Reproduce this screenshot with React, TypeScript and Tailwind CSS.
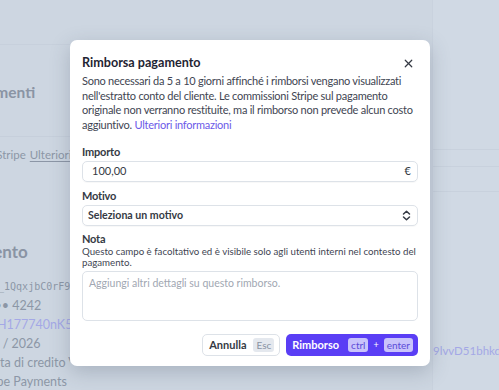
import { X } from "lucide-react";

const font = { fontFamily: "Lato, 'Liberation Sans', sans-serif" };

function Kbd({ children, dark }: { children: React.ReactNode; dark?: boolean }) {
  return (
    <span
      className={
        dark
          ? "rounded-[3px] bg-[#c9c3fb] px-[3px] text-[10px] leading-[14px] font-normal tracking-normal text-[#5b4ad8]"
          : "rounded-[3px] bg-[#e4e8ee] px-[3px] text-[10px] leading-[14px] font-normal tracking-normal text-[#8a93a2]"
      }
    >
      {children}
    </span>
  );
}

function Background() {
  return (
    <div className="flex h-full w-full text-[#8c96a6]">
      <div className="w-[70px] shrink-0 overflow-hidden">
        <div className="h-[45px] border-b border-[#c7d0dc]" />
        <div className="-ml-[38px] mt-[36px] whitespace-nowrap text-[15.5px] font-bold leading-[22px] text-[#8a94a4]">
          Pagamenti
        </div>
        <div className="mt-[33px] border-t border-[#c6cfdb]" />
        <div className="-ml-[25px] mt-[10px] whitespace-nowrap text-[11.5px] leading-[16px]">
          con Stripe <span className="ml-[1px] underline underline-offset-2">Ulteriori informazioni</span>
        </div>
        <div className="-ml-[121px] mt-[78px] whitespace-nowrap text-[17px] font-bold leading-[22px] text-[#8a94a4]">
          Dettagli pagamento
        </div>
        <div className="-ml-[14px] mt-[14px] flex flex-col whitespace-nowrap text-[12.5px] leading-[19px]">
          <span className="font-['DejaVu_Sans_Mono',monospace] text-[10px]">pm_1QqxjbC0rF91vAbc</span>
          <span className="-ml-[6px]">•••• 4242</span>
          <span className="-ml-[45px] text-[#a4a8e6]">pi_3QqxjbH177740nK54im</span>
          <span className="-ml-[1px]">12 / 2026</span>
          <span className="-ml-[5px]">Carta di credito Visa</span>
          <span className="-ml-[8px]">Stripe Payments UK Limited</span>
        </div>
      </div>
      <div className="flex-1" />
      <div className="w-[67px] shrink-0 overflow-hidden border-l border-[#c9d2de] bg-[#d0d9e4]">
        <div className="mt-[149px] border-t border-[#c8d1dd]" />
        <div className="mt-[16px] border-t border-[#c8d1dd]" />
        <div className="mt-[24px] border-t border-[#c8d1dd]" />
        <div className="mt-[151px] whitespace-nowrap text-[11.5px] leading-[16px] text-[#a4a8e6]">
          9lvvD51bhkdRTx
        </div>
      </div>
    </div>
  );
}

export default function App() {
  return (
    <div className="relative h-[390px] w-[499px] overflow-hidden bg-[#cdd6e1]" style={font}>
      <Background />
      <div className="absolute left-[70px] top-[40px] w-[360px] rounded-[7px] bg-white px-[12px] pb-[10px] pt-[13px] shadow-[0_6px_20px_rgba(60,70,90,0.25)]">
        <div className="flex items-center justify-between">
          <div className="text-[12.6px] font-bold leading-[20px] text-[#1f2533]">Rimborsa pagamento</div>
          <X className="mr-[3px] h-[13px] w-[13px] text-[#353a44]" strokeWidth={2.2} />
        </div>
        <p className="mt-[1px] text-[11px] leading-[14.5px] tracking-[-0.25px] text-[#414552]">
          Sono necessari da 5 a 10 giorni affinché i rimborsi vengano visualizzati nell'estratto conto del
          cliente. Le commissioni Stripe sul pagamento originale non verranno restituite, ma il rimborso non
          prevede alcun costo aggiuntivo. <span className="text-[#6c5ae8]">Ulteriori informazioni</span>
        </p>

        <div className="mt-[12px] text-[11px] font-bold leading-[15px] tracking-[-0.2px] text-[#353a44]">Importo</div>
        <div className="mt-[2px] flex h-[21px] items-center justify-between rounded-[5px] border border-[#dde2e8] pl-[9px] pr-[6px] text-[11px] text-[#353a44] shadow-[0_1px_1px_rgba(0,0,0,0.03)]">
          <span>100,00</span>
          <span>€</span>
        </div>

        <div className="mt-[6px] text-[11px] font-bold leading-[15px] tracking-[-0.2px] text-[#353a44]">Motivo</div>
        <div className="mt-[2px] flex h-[21px] items-center justify-between rounded-[5px] border border-[#dde2e8] pl-[5px] pr-[6px] text-[10.6px] font-bold text-[#353a44] shadow-[0_1px_1px_rgba(0,0,0,0.03)]">
          <span>Seleziona un motivo</span>
          <svg width="9" height="11" viewBox="0 0 9 11" fill="none" stroke="#353a44" strokeWidth="1.5" strokeLinecap="round" strokeLinejoin="round">
            <path d="M1.5 4 L4.5 1.2 L7.5 4" />
            <path d="M1.5 7 L4.5 9.8 L7.5 7" />
          </svg>
        </div>

        <div className="mt-[5px] text-[11px] font-bold leading-[15px] tracking-[-0.2px] text-[#353a44]">Nota</div>
        <div className="text-[9.7px] leading-[11px] text-[#414552]">
          Questo campo è facoltativo ed è visibile solo agli utenti interni nel contesto del pagamento.
        </div>
        <div className="mt-[3px] h-[50px] rounded-[5px] border border-[#dde2e8] pl-[6px] pt-[3px] text-[10.5px] leading-[16px] text-[#a1a7b2]">
          Aggiungi altri dettagli su questo rimborso.
        </div>

        <div className="mt-[13px] flex justify-end gap-[6px]">
          <button className="flex h-[22px] items-center gap-[7px] rounded-[5px] border border-[#dde2e8] bg-white pl-[6px] pr-[5px] text-[11px] font-bold text-[#353a44]">
            Annulla <Kbd>Esc</Kbd>
          </button>
          <button className="flex h-[22px] items-center gap-[8px] rounded-[5px] bg-[#5a3ef5] pl-[6px] pr-[5px] text-[11px] font-bold text-white">
            Rimborso
            <span className="ml-[1px] flex items-center gap-[5px]">
              <Kbd dark>ctrl</Kbd>
              <span className="text-[9px] font-normal">+</span>
              <Kbd dark>enter</Kbd>
            </span>
          </button>
        </div>
      </div>
    </div>
  );
}
